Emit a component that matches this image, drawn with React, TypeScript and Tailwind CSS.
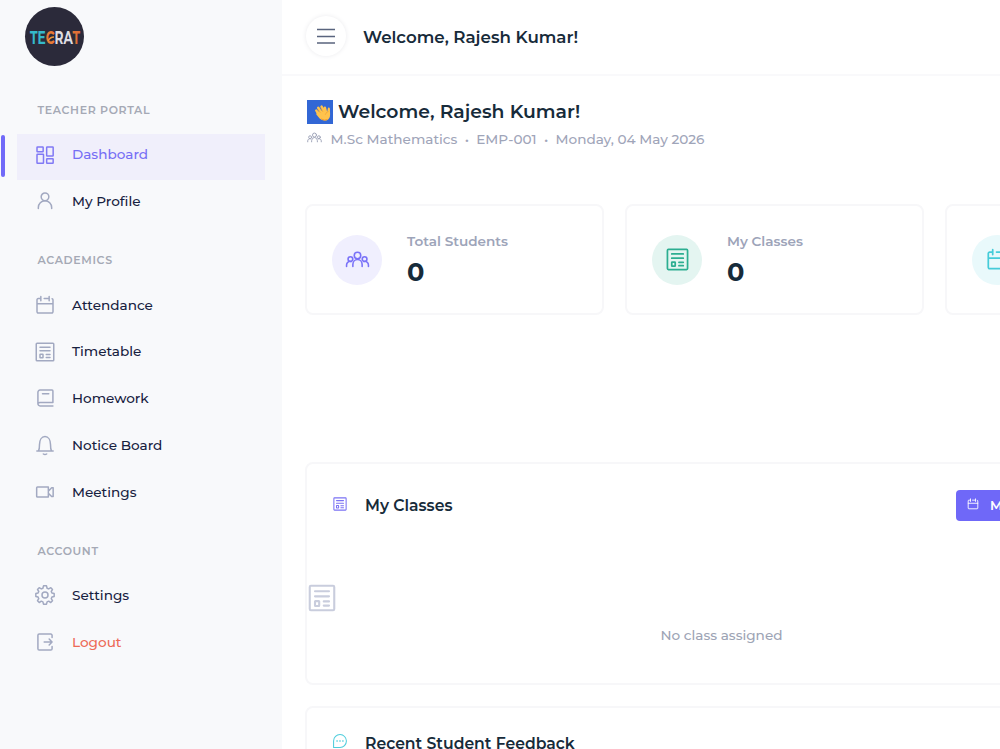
import React from "react";
import clsx from "clsx";

type IconName =
	| "dashboard"
	| "user"
	| "users"
	| "calendar"
	| "table"
	| "book"
	| "bell"
	| "video"
	| "gear"
	| "logout"
	| "chat";

const paths: Record<IconName, React.ReactNode> = {
	dashboard: (
		<>
			<rect x="2.4" y="2.4" width="7.4" height="5.6" rx=".6" />
			<rect x="14" y="2.4" width="7.8" height="10.8" rx=".6" />
			<rect x="2.4" y="11" width="7.8" height="10.8" rx=".6" />
			<rect x="14" y="16.4" width="7.8" height="5.4" rx=".6" />
		</>
	),
	user: (
		<>
			<circle cx="12" cy="7" r="4.6" />
			<path d="M4 21v-1.200a8 8 0 0 1 16 0V21" />
		</>
	),
	users: (
		<>
			<circle cx="12" cy="7.5" r="3.7" />
			<path d="M6.700 20v-2.200a5.300 5.800 0 0 1 10.600 0V20" />
			<circle cx="3.9" cy="11.5" r="2.700" />
			<circle cx="20.1" cy="11.5" r="2.700" />
			<path d="M-.5 20v-1.800a4 4 0 0 1 5.200-3.900M24.500 20v-1.800a4 4 0 0 0-5.200-3.900" />
		</>
	),
	calendar: (
		<path d="M7 1.800v5M17 1.800v5M11 4.300h6M2.400 10.500h19.200M7 4.300H4A1.500 1.500 0 0 0 2.400 6v14A1.500 1.500 0 0 0 4 21.600h16a1.500 1.500 0 0 0 1.600-1.600V6a1.500 1.500 0 0 0-1.100-1.600" />
	),
	table: (
		<>
			<rect x="1.5" y="1.5" width="21" height="21" rx="1" />
			<path d="M6 6.200h12M6 10.600h12M13.500 14.900h4.500M13.500 18.500h4.500" />
			<rect x="6" y="14.7" width="3.6" height="4.2" rx=".4" />
		</>
	),
	book: (
		<path d="M21.500 17.500V3.500a1 1 0 0 0-1-1H6A2.500 2.500 0 0 0 3.500 5v14A2.500 2.500 0 0 0 6 21.500h15.500M3.800 18.500c.5-.7 1.300-1 2.200-1h15.500M9 7h7.500" />
	),
	bell: (
		<path d="M2.200 19.200h19.600M4.200 19c1-1.600 1.200-4 1.200-7.500C5.400 6 8 1.800 12 1.800s6.600 4.200 6.600 9.700c0 3.500.2 5.900 1.200 7.500M10 22.800c1.100.8 2.900.8 4 0" />
	),
	video: (
		<path d="M3 6h13v12H3a1 1 0 0 1-1-1V7a1 1 0 0 1 1-1ZM16 11l4-4h1.800v10.500H20l-4-4" />
	),
	gear: (
		<>
			<path d="M10.200 1h3.600l.7 2.900 1.900.8L19 3.200 21 5.300l-1.500 2.500.8 1.900 2.700.6v3.500l-2.700.7-.8 1.900 1.500 2.400-2.100 2.200-2.500-1.600-1.900.8-.7 2.800h-3.600l-.7-2.800-1.900-.8L5.100 21 3 18.800l1.500-2.400-.8-1.900L1 13.800v-3.500l2.700-.6.8-1.900L3 5.300l2-2.100 2.600 1.500 1.900-.8Z" />
			<circle cx="12" cy="12" r="3.6" />
		</>
	),
	logout: (
		<path d="M20.500 6.500V4A1.500 1.500 0 0 0 19 2.500H5A1.500 1.500 0 0 0 3.500 4v16A1.500 1.500 0 0 0 5 21.500h14a1.500 1.500 0 0 0 1.500-1.500v-2.500M11 12h9.500M17 8.500l3.500 3.500-3.500 3.500" />
	),
	chat: (
		<>
			<path d="M1 23V11.800A11 11 0 1 1 12 23Z" />
			<path d="M6.800 12h.4M11.800 12h.4M16.800 12h.4" strokeWidth="2.6" />
		</>
	),
};

const Icon = ({ name, className }: { name: IconName; className?: string }) => (
	<svg
		viewBox="0 0 24 24"
		fill="none"
		stroke="currentColor"
		strokeWidth="1.8"
		strokeLinecap="round"
		strokeLinejoin="round"
		className={clsx("shrink-0 overflow-visible", className)}
	>
		{paths[name]}
	</svg>
);

type NavItem = {
	label: string;
	icon: IconName;
	active?: boolean;
	danger?: boolean;
};

const groups: { title: string; items: NavItem[] }[] = [
	{
		title: "Teacher Portal",
		items: [
			{ label: "Dashboard", icon: "dashboard", active: true },
			{ label: "My Profile", icon: "user" },
		],
	},
	{
		title: "Academics",
		items: [
			{ label: "Attendance", icon: "calendar" },
			{ label: "Timetable", icon: "table" },
			{ label: "Homework", icon: "book" },
			{ label: "Notice Board", icon: "bell" },
			{ label: "Meetings", icon: "video" },
		],
	},
	{
		title: "Account",
		items: [
			{ label: "Settings", icon: "gear" },
			{ label: "Logout", icon: "logout", danger: true },
		],
	},
];

const Logo = () => (
	<div className="flex h-[59px] w-[59px] items-center justify-center rounded-full bg-[#2b2a3a]">
		<svg
			viewBox="0 0 52 26"
			className="h-[26px] w-[52px] overflow-visible"
			fontFamily="Montserrat, sans-serif"
			fontSize="17.5"
			fontWeight="700"
		>
			<text x="1" y="19.5" textLength="50" lengthAdjust="spacingAndGlyphs">
				<tspan fill="#35b9cb">TE</tspan>
				<tspan fill="#e87a35">C</tspan>
				<tspan fill="#dedde2">RA</tspan>
				<tspan fill="#df7037">T</tspan>
			</text>
			<path d="M19 17q2-4 6-4" stroke="#ef9738" strokeWidth="1.5" fill="none" />
		</svg>
	</div>
);

const Sidebar = () => (
	<aside className="w-[282px] shrink-0 bg-[#f8f9fb]">
		<div className="h-[76.5px] pl-[25px] pt-[7px]">
			<Logo />
		</div>
		{groups.map((group) => (
			<nav key={group.title}>
				<h6 className="flex h-[57px] items-center pl-[37.5px] pt-[10px] text-[11px] font-semibold uppercase tracking-[0.65px] text-[#a5a9b5]">
					{group.title}
				</h6>
				{group.items.map((item) => (
					<div key={item.label} className="flex h-[46.7px] items-center">
						<span
							className={clsx(
								"ml-px mr-3 h-[42px] w-1 self-start rounded-full",
								item.active && "mt-px bg-[#716af8]"
							)}
						/>
						<a
							className={clsx(
								"flex h-full w-[248px] items-center gap-[17px] pb-[4.5px] pl-[18px] text-[13.6px] font-medium",
								item.active && "bg-[#f0effb] text-[#766ef5]",
								item.danger && "text-[#ed6a56]",
								!item.active && !item.danger && "text-[#17213f]"
							)}
						>
							<Icon
								name={item.icon}
								className={clsx(
									"h-5 w-5",
									item.active ? "text-[#817af5]" : "text-[#a2a9c1]"
								)}
							/>
							{item.label}
						</a>
					</div>
				))}
			</nav>
		))}
	</aside>
);

const stats: {
	label: string;
	icon: IconName;
	color: string;
	size: string;
}[] = [
	{ label: "Total Students", icon: "users", color: "bg-[#f0effe] text-[#7a72f8]", size: "h-[21px] w-[21px]" },
	{ label: "My Classes", icon: "table", color: "bg-[#e4f5f1] text-[#2cae91]", size: "h-[23px] w-[23px]" },
	{ label: "Attendance", icon: "calendar", color: "bg-[#e9f9fb] text-[#45ccd9]", size: "h-[23px] w-[23px]" },
];

const card = "rounded-lg border-2 border-[#f7f7f9] bg-white";

const Wave = () => (
	<span className="flex h-6 w-[26px] items-center justify-center bg-[#3267d5] pl-1">
		<svg viewBox="0 0 20 20" className="h-[19px] w-[19px]" strokeLinecap="round">
			<path
				d="M5.500 11 3.500 8M8 9 5.500 5M11 8 9 3.800M13.500 9 12.500 5"
				stroke="#ffc34c"
				strokeWidth="2.6"
			/>
			<path
				d="M4 9.500 12 7l3 2 .8-4q1.700-.8 2 1l.2 6q0 5-4 6.300-4 1-7-2L3.500 12Z"
				fill="#ffc34c"
			/>
			<path d="M7.500 10 5.500 7M10.300 9 8.500 5.500M13 12q1-3 3-3" stroke="#e5932a" strokeWidth=".5" fill="none" />
			<path d="M9 17q3 2 6 .5" stroke="#f19a2c" strokeWidth="1" fill="none" />
		</svg>
	</span>
);

const App = () => {
	return (
		<div className="flex h-[749px] w-[1000px] overflow-hidden bg-white font-['Montserrat','Inter',sans-serif] text-[#172b3a]">
			<Sidebar />
			<main className="min-w-0 flex-1 overflow-hidden">
				<header className="flex h-[76px] items-center border-b-2 border-[#f9f9fb] pl-6">
					<button className="mb-0.5 flex h-10 w-10 items-center justify-center rounded-full bg-white shadow-[0_0_5px_0_#ebebee]">
						<svg viewBox="0 0 18 16" className="h-4 w-[18px]" stroke="#59647e" strokeWidth="1.3">
							<path d="M0 1.500h18M0 8.500h18M0 15h18" />
						</svg>
					</button>
					<h5 className="pl-[17px] pt-px text-[16.7px] font-semibold">
						Welcome, Rajesh Kumar!
					</h5>
				</header>
				<div className="w-[1290px] pl-[23px] pt-[22px]">
					<h4 className="flex h-[28px] items-center gap-[5px] pl-0.5 text-[18.8px] font-semibold">
						<Wave />
						Welcome, Rajesh Kumar!
					</h4>
					<p className="flex h-[27px] items-center gap-[10px] pl-[2.5px] text-[13.6px] font-medium text-[#9fa5b9]">
						<Icon name="users" className="mb-1 h-[13px] w-[13px]" />
						<span>
							M.Sc Mathematics&nbsp; •&nbsp; EMP-001&nbsp; •&nbsp; Monday, 04 May 2026
						</span>
					</p>
					<div className="mt-[51px] flex gap-[21px]">
						{stats.map((stat) => (
							<div
								key={stat.label}
								className={clsx(card, "flex h-[111px] w-[299px] shrink-0 items-center gap-[25px] pl-[25px]")}
							>
								<div
									className={clsx(
										"flex h-[50px] w-[50px] items-center justify-center rounded-full",
										stat.color
									)}
								>
									<Icon name={stat.icon} className={stat.size} />
								</div>
								<div className="pb-[3px]">
									<p className="text-[13.6px] font-semibold leading-5 text-[#9da4b9]">
										{stat.label}
									</p>
									<p className="mt-[7px] text-[25.6px] font-bold leading-7">0</p>
								</div>
							</div>
						))}
					</div>
					<section className={clsx(card, "mt-[147px] h-[223px]")}>
						<div className="flex h-[83px] items-center pl-[26px]">
							<Icon name="table" className="mb-1 h-[14px] w-[14px] text-[#7b72f4]" />
							<h5 className="w-[609px] pl-[18px] pt-px text-[15.65px] font-semibold">
								My Classes
							</h5>
							<button className="flex h-[31px] w-[180px] items-center gap-[11px] whitespace-nowrap rounded bg-[#6f68f8] pl-[11px] text-[13px] font-semibold text-white">
								<Icon name="calendar" className="mb-1 h-3 w-3" />
								Mark Attendance
							</button>
						</div>
						<div className="pt-[37px]">
							<Icon name="table" className="ml-px h-7 w-7 text-[#c9cddd]" />
							<p className="mt-[13px] pl-[353.5px] text-[13.6px] font-medium leading-5 text-[#9da4b5]">
								No class assigned
							</p>
						</div>
					</section>
					<section className={clsx(card, "mt-[21px] h-[220px]")}>
						<div className="flex h-[72px] items-center pl-[26px]">
							<Icon name="chat" className="mb-1.5 h-[14px] w-[14px] text-[#4ecddc]" />
							<h5 className="pl-[18px] text-[15.65px] font-semibold">
								Recent Student Feedback
							</h5>
						</div>
					</section>
				</div>
			</main>
		</div>
	);
};

export default App;
